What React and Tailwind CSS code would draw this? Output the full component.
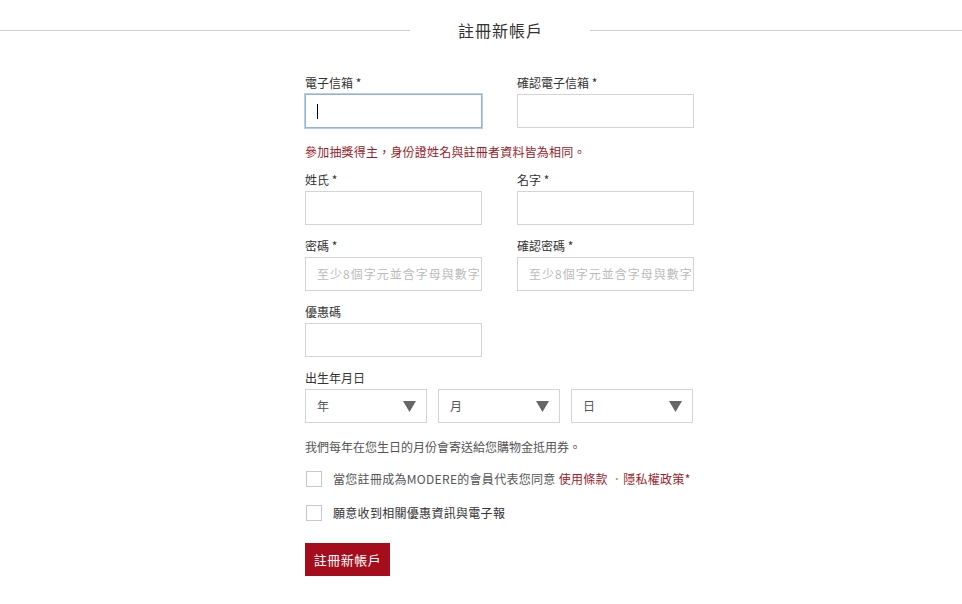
import React from "react";

const font = { fontFamily: '"Noto Sans CJK TC", "Noto Sans", sans-serif' };

function Field({ label, placeholder, focused }) {
  return (
    <div className="w-[177px]">
      <div className="text-[12px] leading-[16px] text-[#333] mb-[3px]">{label}</div>
      <div
        className={`relative h-[34px] w-full bg-white border ${
          focused ? "border-[#92b3dc] shadow-[0_0_0_1px_#b9cdea]" : "border-[#d4d4d4]"
        } flex items-center px-[11px]`}
      >
        {focused && <span className="w-px h-[15px] bg-black" />}
        {placeholder && (
          <span className="text-[12px] tracking-[1px] text-[#bbb] whitespace-nowrap">{placeholder}</span>
        )}
      </div>
    </div>
  );
}

function Select({ label }) {
  return (
    <div className="w-[122px] h-[34px] border border-[#d4d4d4] flex items-center justify-between pl-[11px] pr-[10px]">
      <span className="text-[12px] text-[#555]">{label}</span>
      <svg width="13" height="11" viewBox="0 0 13 11">
        <path d="M0 0h13L6.5 11z" fill="#666" />
      </svg>
    </div>
  );
}

export default function App() {
  return (
    <div className="w-[962px] h-[604px] bg-white" style={font}>
      {/* Title */}
      <div className="flex items-center pt-[19px]">
        <div className="w-[410px] h-px bg-[#cfcfcf]" />
        <div className="pl-[48px] pr-[47px] text-[16px] leading-[22px] text-[#333] tracking-[1px]">註冊新帳戶</div>
        <div className="flex-1 h-px bg-[#cfcfcf]" />
      </div>

      <div className="ml-[305px] w-[389px] mt-[34px]">
        <div className="flex gap-[35px]">
          <Field label="電子信箱 *" focused />
          <Field label="確認電子信箱 *" />
        </div>

        <div className="mt-[16px] text-[12px] leading-[16px] text-[#9b1b2a] tracking-[0.2px]">
          參加抽獎得主，身份證姓名與註冊者資料皆為相同。
        </div>

        <div className="flex gap-[35px] mt-[12px]">
          <Field label="姓氏 *" />
          <Field label="名字 *" />
        </div>

        <div className="flex gap-[35px] mt-[13px]">
          <Field label="密碼 *" placeholder="至少8個字元並含字母與數字" />
          <Field label="確認密碼 *" placeholder="至少8個字元並含字母與數字" />
        </div>

        <div className="mt-[13px]">
          <Field label="優惠碼" />
        </div>

        <div className="mt-[13px]">
          <div className="text-[12px] leading-[16px] text-[#333] mb-[3px]">出生年月日</div>
          <div className="flex gap-[11px]">
            <Select label="年" />
            <Select label="月" />
            <Select label="日" />
          </div>
        </div>

        <div className="mt-[16px] text-[12px] leading-[16px] text-[#555]">
          我們每年在您生日的月份會寄送給您購物金抵用券。
        </div>

        <div className="mt-[16px] flex items-center h-[16px]">
          <span className="w-[16px] h-[16px] border border-[#c8c8c8] bg-white ml-px" />
          <span className="ml-[11px] text-[12px] leading-[16px] text-[#555] tracking-[0.3px]">
            當您註冊成為MODERE的會員代表您同意 <span className="text-[#9b1b2a]">使用條款</span>
            <span className="text-[#999]"> ．</span>
            <span className="text-[#9b1b2a]">隱私權政策</span>
            <span className="text-[#9b1b2a]">*</span>
          </span>
        </div>

        <div className="mt-[18px] flex items-center h-[16px]">
          <span className="w-[16px] h-[16px] border border-[#c8c8c8] bg-white ml-px" />
          <span className="ml-[11px] text-[12px] leading-[16px] text-[#333] tracking-[0.3px]">
            願意收到相關優惠資訊與電子報
          </span>
        </div>

        <button className="mt-[22px] w-[85px] h-[33px] bg-[#a50d1c] text-white text-[13px] tracking-[0.5px]">
          註冊新帳戶
        </button>
      </div>
    </div>
  );
}
